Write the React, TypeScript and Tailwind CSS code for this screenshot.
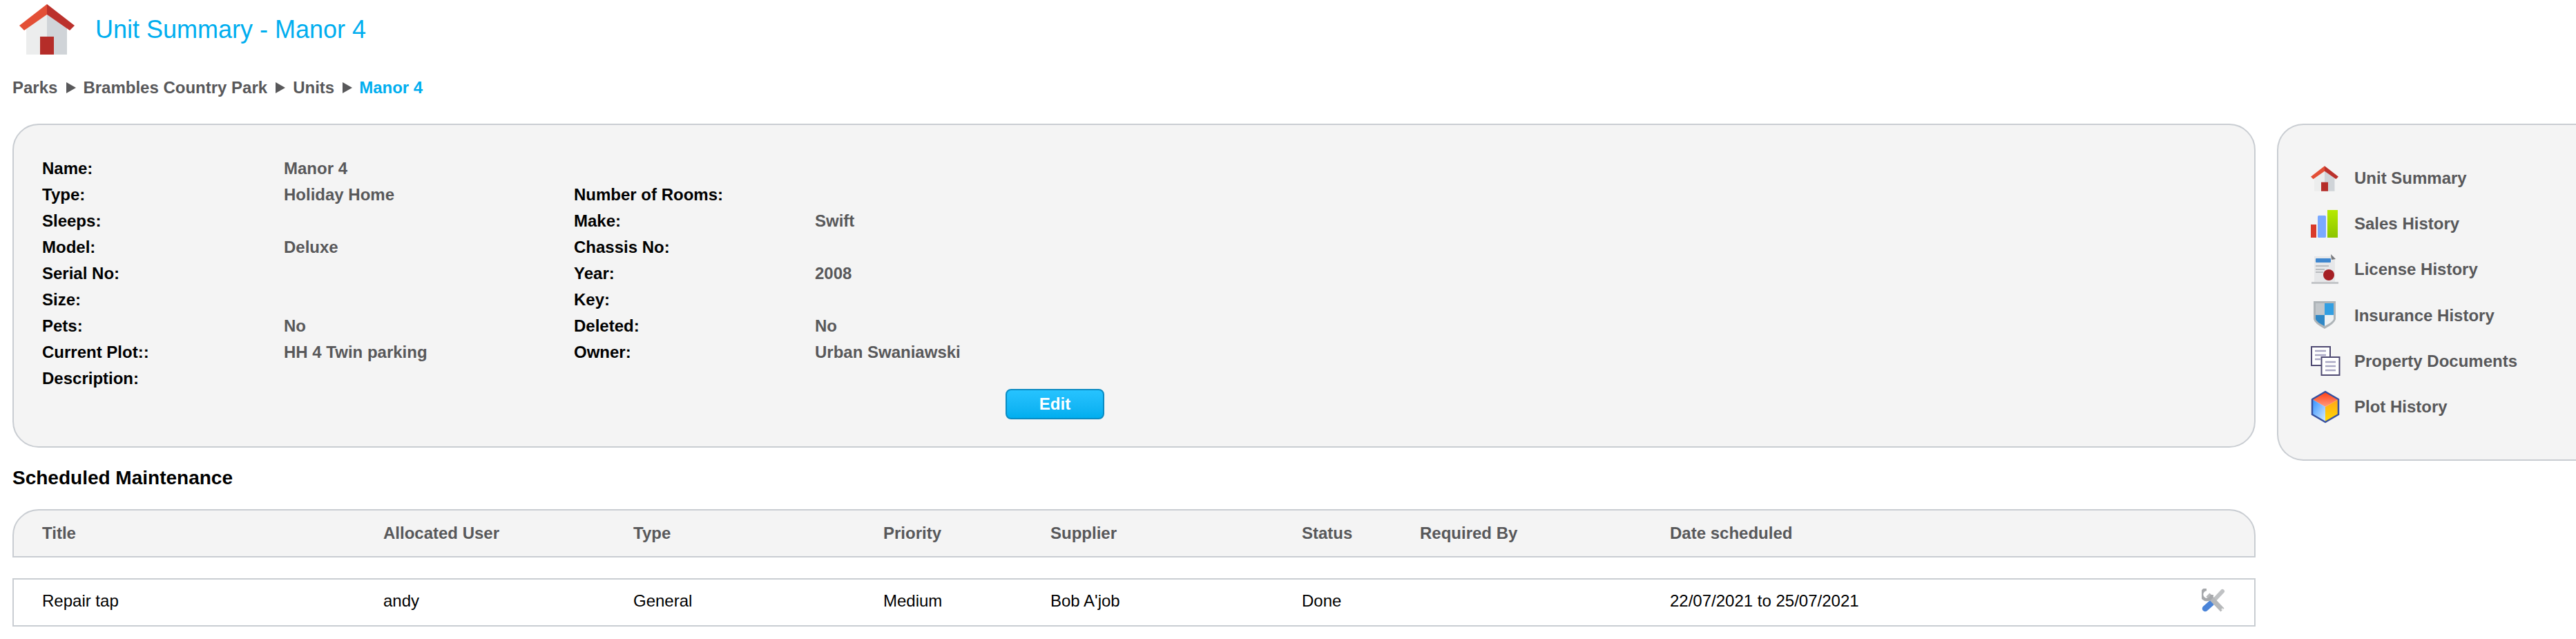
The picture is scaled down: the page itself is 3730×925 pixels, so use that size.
const labelClass = "font-bold text-black";
const valueClass = "font-bold text-[#58585a]";

const DETAIL_ROWS = [
  ["Name:", "Manor 4", "", ""],
  ["Type:", "Holiday Home", "Number of Rooms:", ""],
  ["Sleeps:", "", "Make:", "Swift"],
  ["Model:", "Deluxe", "Chassis No:", ""],
  ["Serial No:", "", "Year:", "2008"],
  ["Size:", "", "Key:", ""],
  ["Pets:", "No", "Deleted:", "No"],
  ["Current Plot::", "HH 4 Twin parking", "Owner:", "Urban Swaniawski"],
  ["Description:", "", "", ""],
];

const TABLE_COLUMNS = [
  ["Title", "Repair tap"],
  ["Allocated User", "andy"],
  ["Type", "General"],
  ["Priority", "Medium"],
  ["Supplier", "Bob A'job"],
  ["Status", "Done"],
  ["Required By", ""],
  ["Date scheduled", "22/07/2021 to 25/07/2021"],
];

const tableGrid =
  "grid h-[70px] grid-cols-[494px_362px_362px_242px_364px_171px_362px_1fr] items-center border-2 border-[#c9cdd2] pl-[41px]";

function HouseIcon({ className }: { className: string }) {
  return (
    <svg viewBox="0 0 80 73" className={`${className} blur-[0.5px]`}>
      <path d="M40 10 L10 34 V73 H40 Z" fill="#eceded" />
      <path d="M40 10 L69 34 V73 H40 Z" fill="#d0d4d8" />
      <rect x="30" y="47" width="20" height="26" fill="#b52d29" />
      <path d="M40 0 L0 31 L7 38 L40 15 Z" fill="#e34f36" />
      <path d="M40 0 L80 31 L73 38 L40 15 Z" fill="#bb312c" />
    </svg>
  );
}

function SalesIcon() {
  return (
    <svg viewBox="0 0 40 40" className="h-10 w-10 blur-[0.4px]">
      <defs>
        <linearGradient id="salesGreen" x1="0" y1="0" x2="0" y2="1">
          <stop offset="0" stopColor="#b6ea00" />
          <stop offset="1" stopColor="#8cc400" />
        </linearGradient>
      </defs>
      <rect x="0" y="21" width="8" height="19" fill="#d93a2b" />
      <rect x="10" y="8" width="12" height="32" rx="1.5" fill="#7aa9ff" />
      <rect x="24" y="0" width="15" height="40" fill="url(#salesGreen)" />
    </svg>
  );
}

function LicenseIcon() {
  return (
    <svg viewBox="0 0 40 44" className="h-11 w-10 blur-[0.5px]">
      <path d="M5 3 H32 L35 8 V41 H5 Z" fill="#e6e7e9" />
      <path d="M29 0 L36 7 L30 8 Z" fill="#77797d" />
      <rect x="7" y="6" width="22" height="6" rx="1" fill="#3f87cf" />
      <rect x="7" y="16" width="19" height="2" fill="#b9bcc0" />
      <rect x="7" y="21" width="13" height="2" fill="#b9bcc0" />
      <rect x="7" y="25" width="11" height="2" fill="#b9bcc0" />
      <circle cx="26" cy="30" r="8" fill="#a51f24" />
      <rect x="1" y="40" width="39" height="3" fill="#c4c6c9" />
    </svg>
  );
}

function ShieldIcon() {
  return (
    <svg viewBox="0 0 36 42" className="ml-[2px] h-[42px] w-9 blur-[0.4px]">
      <path d="M2 0 H34 V26 Q33 32 18 40 Q3 32 2 26 Z" fill="#aeb4b8" />
      <path d="M5 3 H18 V20 H5 Z" fill="#c2c7cb" />
      <path d="M18 3 H31 V20 H18 Z" fill="#339fe2" />
      <path d="M5 20 H18 V36 Q6 30 5 26 Z" fill="#2f87c5" />
      <path d="M18 20 H31 V26 Q30 30 18 36 Z" fill="#eef1f3" />
    </svg>
  );
}

function DocumentsIcon() {
  return (
    <svg viewBox="0 0 43 43" className="h-[43px] w-[43px]">
      <rect x="1" y="1" width="27" height="27" fill="#fff" stroke="#4f4a72" strokeWidth="2" />
      <path d="M6 7 H22 M6 13 H22 M6 19 H14" stroke="#aaa8c4" strokeWidth="2.5" />
      <rect x="15.5" y="16" width="26" height="26" fill="#fff" stroke="#4f4a72" strokeWidth="2" />
      <path d="M21 23 H36 M21 29 H36 M21 35 H36" stroke="#aaa8c4" strokeWidth="2.5" />
    </svg>
  );
}

function CubeIcon() {
  return (
    <svg viewBox="0 0 42 48" className="h-12 w-[42px] blur-[0.3px]">
      <defs>
        <linearGradient id="cubeTop" x1="0" y1="0" x2="0" y2="1">
          <stop offset="0" stopColor="#ff3d10" />
          <stop offset="1" stopColor="#ff9c80" />
        </linearGradient>
        <linearGradient id="cubeLeft" x1="0" y1="0" x2="1" y2="1">
          <stop offset="0" stopColor="#2f8fff" />
          <stop offset="1" stopColor="#d6ecff" />
        </linearGradient>
        <linearGradient id="cubeRight" x1="0" y1="0" x2="0" y2="1">
          <stop offset="0" stopColor="#ffa51a" />
          <stop offset="1" stopColor="#ffdc00" />
        </linearGradient>
      </defs>
      <path d="M21 2 L40 13 L21 24 L2 13 Z" fill="url(#cubeTop)" />
      <path d="M2 13 L21 24 V46 L2 35 Z" fill="url(#cubeLeft)" />
      <path d="M40 13 L21 24 V46 L40 35 Z" fill="url(#cubeRight)" />
      <path d="M21 2 L40 13 V35 L21 46 L2 35 V13 Z" fill="none" stroke="#35509f" strokeWidth="2.5" strokeLinejoin="round" />
    </svg>
  );
}

function ToolsIcon() {
  return (
    <svg viewBox="0 0 34 34" className="h-[34px] w-[34px] blur-[0.6px]">
      {/* Screwdriver */}
      <path d="M30 4 L15 20" stroke="#c0c2c4" strokeWidth="6" strokeLinecap="round" />
      <path d="M14 21 L5 29" stroke="#4a84d8" strokeWidth="8.5" strokeLinecap="round" />
      {/* Wrench */}
      <path d="M9 9 L30 31" stroke="#b6b8ba" strokeWidth="7" />
      <path d="M7 1 A7.5 7.5 0 1 0 15 9" fill="none" stroke="#a6a8ab" strokeWidth="4.5" />
      <circle cx="30" cy="30" r="1.5" fill="#f2f2f2" />
    </svg>
  );
}

function Separator() {
  return (
    <svg viewBox="0 0 14 16" className="h-4 w-3.5 fill-[#58585a]">
      <path d="M0 0 L14 8 L0 16 Z" />
    </svg>
  );
}

const SIDEBAR_ITEMS = [
  { label: "Unit Summary", icon: <HouseIcon className="h-[37px] w-10" /> },
  { label: "Sales History", icon: <SalesIcon /> },
  { label: "License History", icon: <LicenseIcon /> },
  { label: "Insurance History", icon: <ShieldIcon /> },
  { label: "Property Documents", icon: <DocumentsIcon /> },
  { label: "Plot History", icon: <CubeIcon /> },
];

export default function App() {
  return (
    <div className="h-[925px] w-[3730px] overflow-hidden bg-white font-['Liberation_Sans',Arial,sans-serif] text-[24px] leading-[38px]">
      {/* Page title */}
      <div className="flex h-[85px] items-center pl-[28px]">
        <HouseIcon className="h-[73px] w-[80px]" />
        <h1 className="ml-[30px] text-[36px] font-normal text-[#00aeef]">Unit Summary - Manor 4</h1>
      </div>

      {/* Breadcrumb */}
      <nav className="mt-[23px] flex h-[38px] items-center pl-[18px] font-bold text-[#58585a]">
        <span>Parks</span>
        <span className="ml-[13px] mr-[10px]"><Separator /></span>
        <span>Brambles Country Park</span>
        <span className="ml-[12px] mr-[11px]"><Separator /></span>
        <span>Units</span>
        <span className="ml-[12px] mr-[10px]"><Separator /></span>
        <span className="text-[#00aeef]">Manor 4</span>
      </nav>

      <div className="mt-[33px] flex items-start">
        <div className="ml-[18px] w-[3248px] flex-none">
          {/* Unit details */}
          <section className="h-[469px] rounded-[38px] border-2 border-[#c9cdd2] bg-[#f4f4f4] pl-[41px] pt-[44px]">
            {DETAIL_ROWS.map(([label, value, label2, value2]) => (
              <div key={label} className="grid h-[38px] grid-cols-[350px_420px_349px_1fr] items-center">
                <span className={labelClass}>{label}</span>
                <span className={valueClass}>{value}</span>
                <span className={labelClass}>{label2}</span>
                <span className={valueClass}>{value2}</span>
              </div>
            ))}
            <button className="ml-[1395px] mt-[-4px] block h-[44px] w-[143px] rounded-[8px] border-2 border-[#0a8bc2] bg-gradient-to-b from-[#26c3ff] to-[#00aeef] font-bold leading-none text-white">
              Edit
            </button>
          </section>

          {/* Scheduled maintenance */}
          <h2 className="mt-[25px] text-[28px] font-bold leading-[38px] text-black">Scheduled Maintenance</h2>
          <div className={`${tableGrid} mt-[26px] rounded-t-[38px] bg-[#f4f4f4] font-bold text-[#58585a]`}>
            {TABLE_COLUMNS.map(([heading]) => (
              <span key={heading}>{heading}</span>
            ))}
          </div>
          <div className={`${tableGrid} relative mt-[30px] pb-[4px] text-black`}>
            {TABLE_COLUMNS.map(([heading, cell]) => (
              <span key={heading}>{cell}</span>
            ))}
            <span className="absolute right-[42px] top-[13px]"><ToolsIcon /></span>
          </div>
        </div>

        {/* Sidebar */}
        <aside className="ml-[31px] h-[488px] flex-1 rounded-l-[38px] border-2 border-r-0 border-[#c9cdd2] bg-[#f4f4f4] pl-[47px] pt-[44px]">
          {SIDEBAR_ITEMS.map((item) => (
            <div key={item.label} className="flex h-[66.2px] items-center font-bold text-[#58585a]">
              <span className="flex w-[63px] flex-none items-center">{item.icon}</span>
              <span>{item.label}</span>
            </div>
          ))}
        </aside>
      </div>
    </div>
  );
}
